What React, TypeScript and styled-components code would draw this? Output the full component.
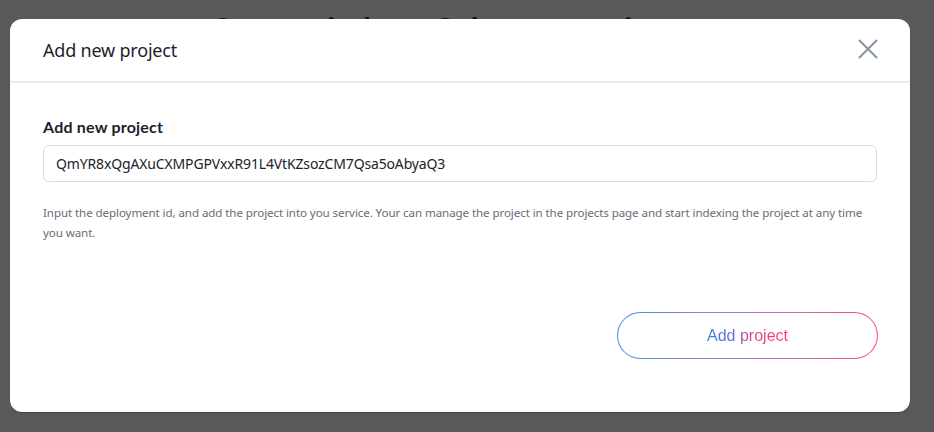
import React from "react";
import styled, { createGlobalStyle } from "styled-components";

const Global = createGlobalStyle`
  html, body { margin: 0; padding: 0; }
  body {
    width: 934px;
    height: 432px;
    overflow: hidden;
    background: #58595b;
    font-family: "Open Sans", "Noto Sans", sans-serif;
  }
`;

const Page = styled.div`
  position: relative;
  width: 934px;
  height: 432px;
  display: flex;
  flex-direction: column;
  align-items: center;
`;

const BackTitle = styled.h1`
  margin: 9px 0 0 -44px;
  font-family: "Lato", sans-serif;
  font-weight: 700;
  font-size: 31px;
  color: #111214;
  letter-spacing: 0.3px;
`;

const Modal = styled.div`
  position: absolute;
  left: 10px;
  top: 19px;
  width: 900px;
  height: 393px;
  background: #fff;
  border-radius: 12px;
  box-shadow: 0 1px 1px rgba(0, 0, 0, 0.25);
  display: flex;
  flex-direction: column;
`;

const Header = styled.div`
  height: 62px;
  padding: 0 31px 0 33px;
  display: flex;
  align-items: center;
  justify-content: space-between;
  border-bottom: 2px solid #ebebf1;
`;

const HeaderTitle = styled.div`
  font-family: "Noto Sans", sans-serif;
  font-size: 18px;
  color: #1d1e2c;
  letter-spacing: -0.2px;
  margin-top: -1px;
`;

const CloseButton = styled.button`
  border: none;
  background: none;
  padding: 0;
  width: 22px;
  height: 22px;
  display: flex;
  align-items: center;
  justify-content: center;
  cursor: pointer;
  margin-top: -2px;
`;

const Body = styled.div`
  padding: 33px 33px 0 33px;
  display: flex;
  flex-direction: column;
`;

const Label = styled.label`
  font-family: "Lato", sans-serif;
  font-size: 16px;
  font-weight: 700;
  color: #1d1e2c;
  line-height: 22px;
  letter-spacing: 0.2px;
`;

const Input = styled.input`
  margin-top: 7px;
  height: 37px;
  box-sizing: border-box;
  border: 1px solid #dcdcdc;
  border-radius: 6px;
  padding: 0 12px;
  font-family: "Noto Sans", sans-serif;
  font-size: 14px;
  letter-spacing: -0.15px;
  color: #222228;
  outline: none;
`;

const Help = styled.p`
  margin: 21px 0 0 0;
  font-family: "Noto Sans", sans-serif;
  font-size: 11.6px;
  line-height: 20px;
  color: #6b6b73;
  letter-spacing: -0.1px;
`;

const Footer = styled.div`
  margin-top: 69px;
  padding: 0 32px;
  display: flex;
  justify-content: flex-end;
`;

const GradientButton = styled.button`
  width: 261px;
  height: 47px;
  border-radius: 24px;
  border: 1px solid transparent;
  background: linear-gradient(#fff, #fff) padding-box,
    linear-gradient(90deg, #4a8ee6 0%, #a879c9 50%, #ff4a80 100%) border-box;
  display: flex;
  align-items: center;
  justify-content: center;
  cursor: pointer;
`;

const GradientText = styled.span`
  font-family: "Liberation Sans", Arial, sans-serif;
  font-size: 16px;
  background: linear-gradient(
    90deg,
    #3a7de0 0%,
    #4a7bdc 26%,
    #9a5ab4 42%,
    #e8418a 62%,
    #ff3d7a 100%
  );
  -webkit-background-clip: text;
  background-clip: text;
  color: transparent;
`;

export default function App() {
  return (
    <>
      <Global />
      <Page>
        <BackTitle>Start to index a Subquery project</BackTitle>
        <Modal>
          <Header>
            <HeaderTitle>Add new project</HeaderTitle>
            <CloseButton aria-label="close">
              <svg width="20" height="20" viewBox="0 0 20 20">
                <path
                  d="M1.5 1.5 L18.5 18.5 M18.5 1.5 L1.5 18.5"
                  stroke="#8695a4"
                  strokeWidth="2"
                  strokeLinecap="round"
                  fill="none"
                />
              </svg>
            </CloseButton>
          </Header>
          <Body>
            <Label>Add new project</Label>
            <Input readOnly value="QmYR8xQgAXuCXMPGPVxxR91L4VtKZsozCM7Qsa5oAbyaQ3" />
            <Help>
              Input the deployment id, and add the project into you service. Your can manage the
              project in the projects page and start indexing the project at any time you want.
            </Help>
          </Body>
          <Footer>
            <GradientButton>
              <GradientText>Add project</GradientText>
            </GradientButton>
          </Footer>
        </Modal>
      </Page>
    </>
  );
}
